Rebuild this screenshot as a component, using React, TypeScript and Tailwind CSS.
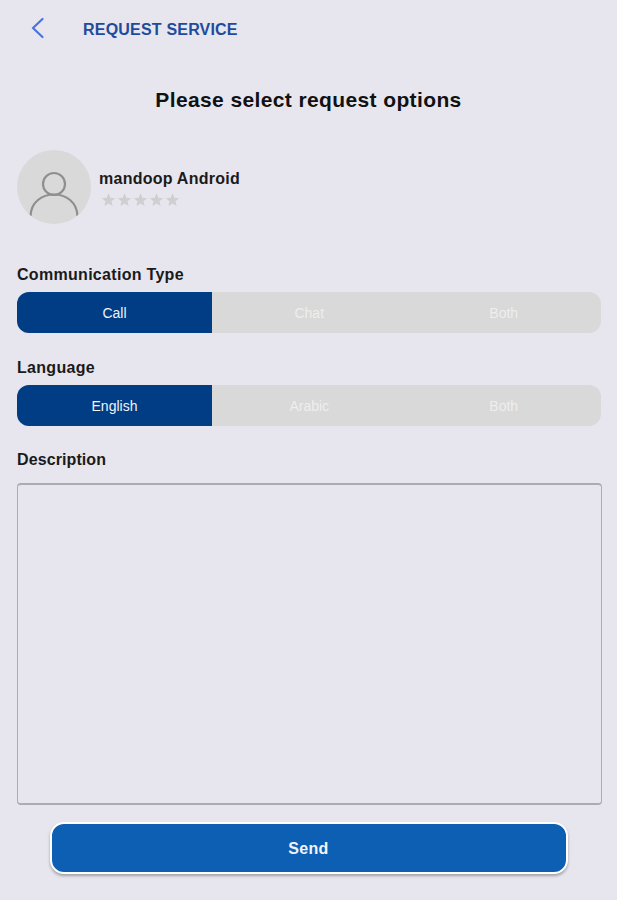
import React from "react";

function Segments({ items }: { items: string[] }) {
  return (
    <div className="flex h-[41px] w-[584px] overflow-hidden rounded-[12px] bg-[#d9d9d9]">
      {items.map((t, i) => (
        <div
          key={t}
          className={
            i === 0
              ? "flex w-[195px] items-center justify-center bg-[#013d84] pt-[2px] text-[14px] text-[#f0f2f8]"
              : "flex w-[194.5px] items-center justify-center pt-[2px] text-[14px] text-[#eeeeee]"
          }
        >
          {t}
        </div>
      ))}
    </div>
  );
}

function Star() {
  return (
    <svg width="15" height="15" viewBox="0 0 24 24" className="fill-[#cfcfd2]">
      <path d="M12 2l3 7.2 7.6.6-5.8 5 1.8 7.500L12 18.200l-6.600 4.100 1.800-7.500-5.800-5L9 9.200z" />
    </svg>
  );
}

export default function App() {
  return (
    <div className="flex h-[900px] w-[617px] flex-col overflow-hidden bg-[#e7e6ef] font-['Liberation_Sans',Arial,sans-serif]">
      <div className="flex h-[58px] items-center pl-[30px]">
        <svg width="14" height="22" viewBox="0 0 14 22" fill="none" className="mt-[-3px] stroke-[#4a74dc]">
          <path d="M12.500 2 L3 11 L12.500 20" strokeWidth="2.200" strokeLinecap="round" strokeLinejoin="round" />
        </svg>
        <div className="ml-[39px] pt-[1px] text-[16px] font-bold leading-none tracking-[0.2px] text-[#1e4b9b]">REQUEST SERVICE</div>
      </div>

      <div className="mt-[29px] text-center text-[21px] font-bold leading-[26px] tracking-[0.38px] text-[#111111]">
        Please select request options
      </div>

      <div className="mt-[37px] flex pl-[17px]">
        <div className="relative h-[74px] w-[74px] overflow-hidden rounded-full bg-[#d9d9d9]">
          <svg width="74" height="74" viewBox="0 0 74 74" fill="none" className="stroke-[#8f8f8f]">
            <circle cx="37" cy="34" r="11" strokeWidth="2.200" />
            <path d="M13.500 66 C14 52 25 44.500 37 44.500 C49 44.500 60 52 60.500 66" strokeWidth="2.200" />
          </svg>
        </div>
        <div className="ml-[8px] pt-[20px]">
          <div className="text-[16px] font-bold leading-[18px] tracking-[0.25px] text-[#1a1a1a]">mandoop Android</div>
          <div className="ml-[2px] mt-[4px] flex gap-px">
            <Star />
            <Star />
            <Star />
            <Star />
            <Star />
          </div>
        </div>
      </div>

      <div className="mt-[41px] pl-[17px]">
        <div className="mb-[7px] text-[16px] font-bold leading-[20px] tracking-[0.3px] text-[#1a1a1a]">Communication Type</div>
        <Segments items={["Call", "Chat", "Both"]} />
        <div className="mb-[7px] mt-[25px] text-[16px] font-bold leading-[20px] tracking-[0.3px] text-[#1a1a1a]">Language</div>
        <Segments items={["English", "Arabic", "Both"]} />
        <div className="mb-[13px] mt-[24px] text-[16px] font-bold leading-[20px] tracking-[0.1px] text-[#1a1a1a]">Description</div>
        <div className="h-[322px] w-[585px] rounded-[4px] border border-b-2 border-t-2 border-[#ababb0]" />
      </div>

      <div className="mt-[17px] flex justify-center">
        <button className="h-[52px] w-[518px] rounded-[14px] border-2 border-white bg-[#0d5fb3] pt-[1px] text-[16px] font-bold tracking-[0.3px] text-[#f0f4fa] shadow-[0_2px_3px_rgba(0,0,0,0.3)]">
          Send
        </button>
      </div>
    </div>
  );
}
